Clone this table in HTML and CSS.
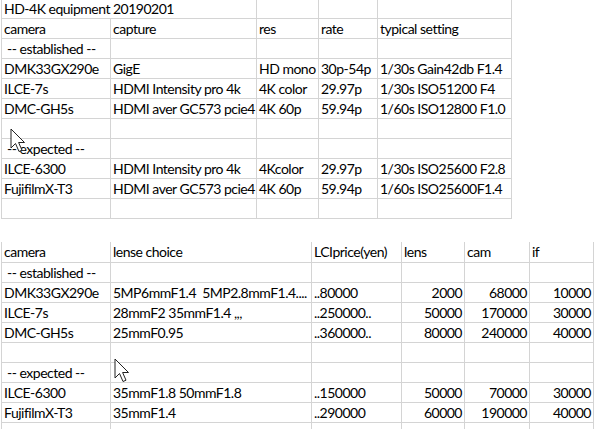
FILE: index.html
```html
<!DOCTYPE html>
<html>
<head>
<meta charset="utf-8">
<link rel="stylesheet" href="styles.css">
</head>
<body>
<div class="page">
  <div class="sheet sheet-top">
    <div class="c first span2 title">HD-4K equipment 20190201</div><div class="c"></div><div class="c"></div><div class="c"></div>
    <div class="c first">camera</div><div class="c">capture</div><div class="c">res</div><div class="c">rate</div><div class="c">typical setting</div>
    <div class="c first"> -- established --</div><div class="c"></div><div class="c"></div><div class="c"></div><div class="c"></div>
    <div class="c first">DMK33GX290e</div><div class="c">GigE</div><div class="c">HD mono</div><div class="c">30p-54p</div><div class="c">1/30s Gain42db F1.4</div>
    <div class="c first">ILCE-7s</div><div class="c">HDMI Intensity pro 4k</div><div class="c">4K color</div><div class="c">29.97p</div><div class="c">1/30s ISO51200 F4</div>
    <div class="c first">DMC-GH5s</div><div class="c">HDMI aver GC573 pcie4</div><div class="c">4K 60p</div><div class="c">59.94p</div><div class="c">1/60s ISO12800 F1.0</div>
    <div class="c first"></div><div class="c"></div><div class="c"></div><div class="c"></div><div class="c"></div>
    <div class="c first"> -- expected --</div><div class="c"></div><div class="c"></div><div class="c"></div><div class="c"></div>
    <div class="c first">ILCE-6300</div><div class="c">HDMI Intensity pro 4k</div><div class="c">4Kcolor</div><div class="c">29.97p</div><div class="c">1/30s ISO25600 F2.8</div>
    <div class="c first">FujifilmX-T3</div><div class="c">HDMI aver GC573 pcie4</div><div class="c">4K 60p</div><div class="c">59.94p</div><div class="c">1/60s ISO25600F1.4</div>
    <div class="c first"></div><div class="c"></div><div class="c"></div><div class="c"></div><div class="c"></div>
  </div>

  <div class="sheet sheet-bottom">
    <div class="c first head">camera</div><div class="c head">lense choice</div><div class="c head">LCIprice(yen)</div><div class="c head">lens</div><div class="c head">cam</div><div class="c head">if</div>
    <div class="c first"> -- established --</div><div class="c"></div><div class="c"></div><div class="c"></div><div class="c"></div><div class="c"></div>
    <div class="c first">DMK33GX290e</div><div class="c">5MP6mmF1.4  5MP2.8mmF1.4....</div><div class="c">..80000</div><div class="c num">2000</div><div class="c num">68000</div><div class="c num">10000</div>
    <div class="c first">ILCE-7s</div><div class="c">28mmF2 35mmF1.4 ,,,</div><div class="c">..250000..</div><div class="c num">50000</div><div class="c num">170000</div><div class="c num">30000</div>
    <div class="c first">DMC-GH5s</div><div class="c">25mmF0.95</div><div class="c">..360000..</div><div class="c num">80000</div><div class="c num">240000</div><div class="c num">40000</div>
    <div class="c first"></div><div class="c"></div><div class="c"></div><div class="c"></div><div class="c"></div><div class="c"></div>
    <div class="c first"> -- expected --</div><div class="c"></div><div class="c"></div><div class="c"></div><div class="c"></div><div class="c"></div>
    <div class="c first">ILCE-6300</div><div class="c">35mmF1.8 50mmF1.8</div><div class="c">..150000</div><div class="c num">50000</div><div class="c num">70000</div><div class="c num">30000</div>
    <div class="c first">FujifilmX-T3</div><div class="c">35mmF1.4</div><div class="c">..290000</div><div class="c num">60000</div><div class="c num">190000</div><div class="c num">40000</div>
    <div class="c first tail"></div><div class="c tail"></div><div class="c tail"></div><div class="c tail"></div><div class="c tail"></div><div class="c tail"></div>
  </div>

  <svg class="cursor cursor-a" width="18" height="26" viewBox="0 0 18 26"><path d="M1 1 L1 20 L5.5 15.5 L9 23.5 L12 22.2 L8.6 14.5 L14.5 14.5 Z" fill="#fff" stroke="#222" stroke-width="1" stroke-linejoin="miter"/></svg>
  <svg class="cursor cursor-b" width="18" height="26" viewBox="0 0 18 26"><path d="M1 1 L1 20 L5.5 15.5 L9 23.5 L12 22.2 L8.6 14.5 L14.5 14.5 Z" fill="#fff" stroke="#222" stroke-width="1" stroke-linejoin="miter"/></svg>
</div>
</body>
</html>
```

FILE: styles.css
```css
html, body {
  margin: 0;
  padding: 0;
  background: #ffffff;
}

.page {
  position: relative;
  width: 600px;
  height: 440px;
  font-family: Lato, "Liberation Sans", sans-serif;
  font-size: 14px;
  letter-spacing: -0.5px;
  color: #000;
}

.sheet {
  display: grid;
  margin-left: 1px;
}

.sheet-top {
  grid-template-columns: 110px 146px 62px 59px 134px;
  grid-auto-rows: 20px;
  grid-template-rows: 19px;
}

.sheet-bottom {
  margin-top: 23px;
  grid-template-columns: 110px 201px 90px 63px 65px 64px;
  grid-auto-rows: 20px;
  grid-template-rows: 21px;
}

.c {
  box-sizing: border-box;
  border-right: 1px solid #d4d4d4;
  border-bottom: 1px solid #d4d4d4;
  padding: 0 2px;
  line-height: 19px;
  white-space: pre;
  overflow: hidden;
}

.c.first {
  border-left: 1px solid #d4d4d4;
  padding-left: 2px;
}

.span2 {
  grid-column: span 2;
}

.title {
  line-height: 18px;
}

.head {
  line-height: 20px;
}

.num {
  text-align: right;
  padding-right: 2px;
}

.tail {
  height: 6px;
  border-bottom: none;
}

.cursor {
  position: absolute;
}

.cursor-a {
  left: 10px;
  top: 128px;
}

.cursor-b {
  left: 114px;
  top: 358px;
}
```
